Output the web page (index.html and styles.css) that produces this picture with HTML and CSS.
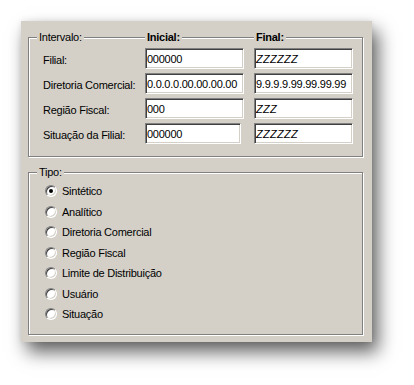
FILE: index.html
```html
<!DOCTYPE html>
<html lang="pt">
<head>
<meta charset="utf-8">
<link rel="stylesheet" href="styles.css">
</head>
<body>
<div class="panel">
  <div class="group g1">
    <div class="grid head">
      <span class="legend">Intervalo:</span>
      <span class="legend bold">Inicial:</span>
      <span class="legend bold">Final:</span>
    </div>
    <div class="grid row">
      <span class="label">Filial:</span>
      <input class="field" value="000000">
      <input class="field z" value="ZZZZZZ">
    </div>
    <div class="grid row">
      <span class="label">Diretoria Comercial:</span>
      <input class="field" value="0.0.0.0.00.00.00.00">
      <input class="field" value="9.9.9.9.99.99.99.99">
    </div>
    <div class="grid row">
      <span class="label">Região Fiscal:</span>
      <input class="field" value="000">
      <input class="field z" value="ZZZ">
    </div>
    <div class="grid row">
      <span class="label">Situação da Filial:</span>
      <input class="field short" value="000000">
      <input class="field z" value="ZZZZZZ">
    </div>
  </div>
  <div class="group g2">
    <div class="head2"><span class="legend">Tipo:</span></div>
    <div class="opts">
      <div class="opt"><span class="radio on"></span><span>Sintético</span></div>
      <div class="opt"><span class="radio"></span><span>Analítico</span></div>
      <div class="opt"><span class="radio"></span><span>Diretoria Comercial</span></div>
      <div class="opt"><span class="radio"></span><span>Região Fiscal</span></div>
      <div class="opt"><span class="radio"></span><span>Limite de Distribuição</span></div>
      <div class="opt"><span class="radio"></span><span>Usuário</span></div>
      <div class="opt"><span class="radio"></span><span>Situação</span></div>
    </div>
  </div>
</div>
</body>
</html>
```
FILE: styles.css
```css
html, body {
  margin: 0;
  padding: 0;
  background: #fff;
}
html {
  height: 100%;
}
body {
  box-sizing: border-box;
  min-height: 385px;
  padding: 21px 0 0 21px;
  font-family: "Liberation Sans", Arial, sans-serif;
  font-size: 11px;
  letter-spacing: -0.25px;
  color: #000;
}
.panel {
  box-sizing: border-box;
  width: 351px;
  height: 321px;
  background: #d4d0c8;
  padding: 16px 8px 7px 7px;
  box-shadow: 6px 10px 17px rgba(0, 0, 0, 0.62), 0 0 6px rgba(0, 0, 0, 0.08);
}
.group {
  box-sizing: border-box;
  width: 335px;
  border: 1px solid #808080;
  box-shadow: inset 1px 1px #fff, 1px 1px #fff;
}
.g1 {
  height: 120px;
}
.g2 {
  height: 163px;
  margin-top: 15px;
}
.grid {
  display: grid;
  grid-template-columns: 116px 109px 100px;
  align-items: center;
}
.head {
  margin-top: -8px;
  height: 14px;
  padding-left: 8px;
  grid-template-columns: 108px 109px 100px;
}
.legend {
  justify-self: start;
  background: #d4d0c8;
  padding: 0 2px;
  line-height: 14px;
  white-space: nowrap;
}
.bold {
  font-weight: bold;
}
.row {
  height: 21px;
  margin-top: 4px;
}
.label {
  padding-left: 14px;
  padding-top: 2px;
  white-space: nowrap;
}
.field {
  box-sizing: border-box;
  width: 99px;
  height: 21px;
  margin: 0;
  padding: 0 1px;
  font: 11px "Liberation Sans", Arial, sans-serif;
  letter-spacing: -0.25px;
  color: #000;
  background: #fff;
  border: 1px solid;
  border-color: #808080 #fff #fff #808080;
  box-shadow: inset 1px 1px #404040, inset -1px -1px #d4d0c8;
  outline: none;
}
.field.short {
  width: 96px;
}
.field.z {
  font-style: italic;
  letter-spacing: 0.3px;
}
.head2 {
  margin-top: -8px;
  height: 14px;
  padding-left: 8px;
  display: flex;
}
.opts {
  padding-top: 2px;
  padding-left: 16px;
}
.opt {
  display: flex;
  align-items: center;
  height: 20.5px;
  gap: 5px;
  white-space: nowrap;
}
.radio {
  position: relative;
  box-sizing: border-box;
  width: 12px;
  height: 12px;
  border-radius: 50%;
  background: #fff;
  border: 1px solid;
  border-color: #808080 #fff #fff #808080;
  box-shadow: inset 1px 1px #404040, inset -1px -1px #d4d0c8;
  flex: none;
}
.radio.on::after {
  content: "";
  position: absolute;
  left: 3px;
  top: 3px;
  width: 4px;
  height: 4px;
  border-radius: 50%;
  background: #000;
}
```
